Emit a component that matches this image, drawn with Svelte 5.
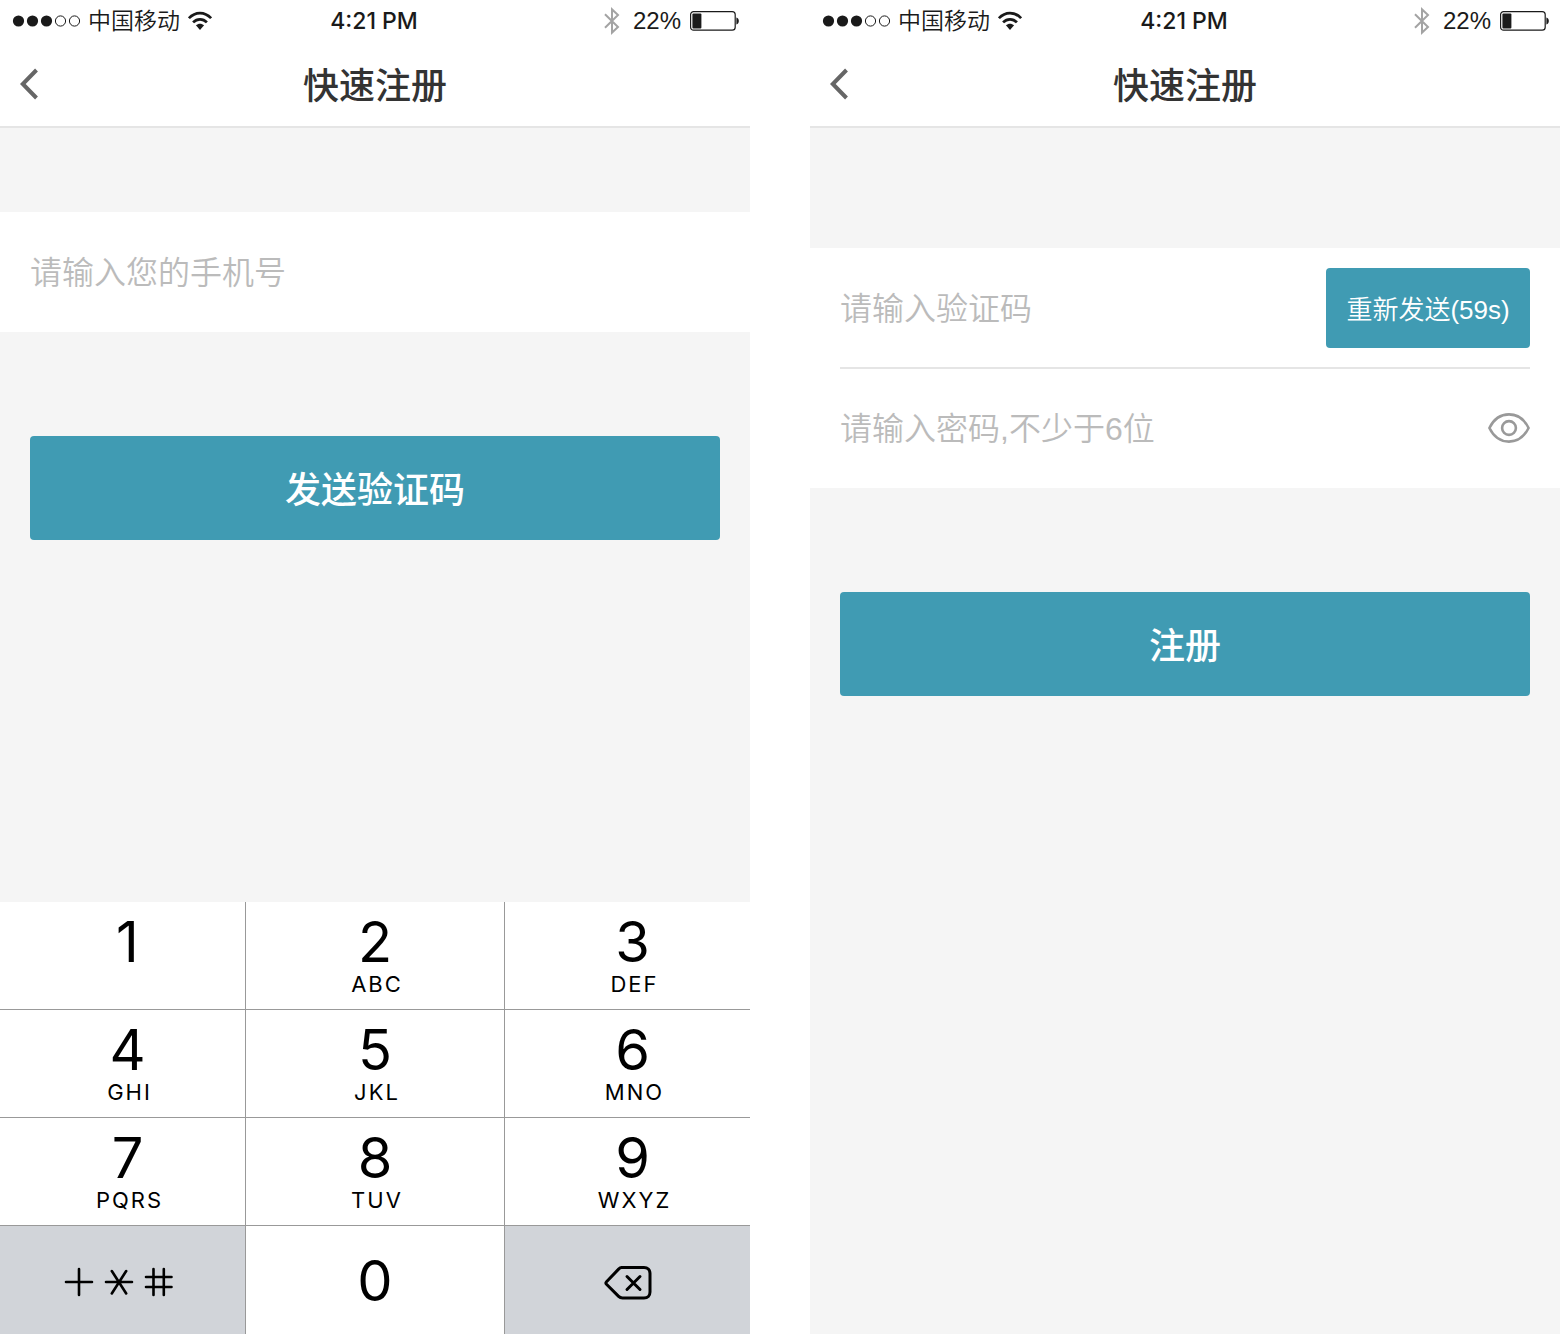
<script>
  let phone = $state('');
  let code = $state('');
  let password = $state('');
  let visible = $state(false);

  const keys = [
    ['1', ''],
    ['2', 'ABC'],
    ['3', 'DEF'],
    ['4', 'GHI'],
    ['5', 'JKL'],
    ['6', 'MNO'],
    ['7', 'PQRS'],
    ['8', 'TUV'],
    ['9', 'WXYZ']
  ];

  function press(digit) {
    phone += digit;
  }

  function erase() {
    phone = phone.slice(0, -1);
  }
</script>

{#snippet topBar()}
  <div class="status">
    <div class="carrier">
      <svg class="dots" width="68" height="12" viewBox="0 0 68 12" aria-hidden="true">
        <g fill="#1a1a1a">
          <circle cx="6.5" cy="6" r="5.6" />
          <circle cx="20.5" cy="6" r="5.6" />
          <circle cx="34.5" cy="6" r="5.6" />
        </g>
        <g fill="none" stroke="#1a1a1a" stroke-width="1">
          <circle cx="48.5" cy="6" r="5.1" />
          <circle cx="62.5" cy="6" r="5.1" />
        </g>
      </svg>
      <span class="operator">中国移动</span>
      <svg width="24" height="20" viewBox="0 0 24 20" aria-hidden="true">
        <g fill="none" stroke="#1a1a1a" stroke-width="2.7">
          <path d="M.9 7.2C7.2.3 16.8.3 23.1 7.2" />
          <path d="M5.1 11.4c4-4.1 9.8-4.1 13.8 0" />
        </g>
        <path d="M7.9 14.3c2.5-2.1 5.7-2.1 8.2 0L12 18.9z" fill="#1a1a1a" />
      </svg>
    </div>
    <time class="time">4:21 PM</time>
    <div class="power">
      <svg width="16" height="28" viewBox="0 0 16 28" fill="none" stroke="#a3a3a3" stroke-width="2" aria-hidden="true">
        <path d="M1 7.2 14 20 8 25.6V2.4L14 8 1 20.8" />
      </svg>
      <span class="percent">22%</span>
      <svg width="50" height="20" viewBox="0 0 50 20" aria-hidden="true">
        <rect x=".6" y=".6" width="44.6" height="18.6" rx="3" fill="none" stroke="#1a1a1a" stroke-width="1.2" />
        <rect x="2.4" y="2.4" width="9" height="15" rx="1" fill="#1a1a1a" />
        <path d="M46.4 6.4c3.2.8 3.2 6.2 0 7z" fill="#1a1a1a" />
      </svg>
    </div>
  </div>
  <header class="nav">
    <button class="back" type="button" aria-label="返回">
      <svg width="20" height="32" viewBox="0 0 20 32" fill="none" stroke="#666" stroke-width="4" aria-hidden="true">
        <path d="M16.500 2 2.800 16l13.700 14" />
      </svg>
    </button>
    <h1>快速注册</h1>
  </header>
{/snippet}

<main class="board">
  <section class="screen">
    {@render topBar()}
    <form class="form phone-form" onsubmit={(e) => e.preventDefault()}>
      <div class="fields">
        <div class="field">
          <input type="tel" aria-label="手机号" placeholder="请输入您的手机号" bind:value={phone} />
        </div>
      </div>
      <button class="submit" type="submit">发送验证码</button>
    </form>
    <div class="keypad">
      {#each keys as [digit, letters]}
        <button class="key" type="button" onclick={() => press(digit)}>
          <span class="digit">{digit}</span>
          <span class="letters">{letters}</span>
        </button>
      {/each}
      <button class="key tool symbols" type="button" aria-label="符号">
        <svg width="110" height="30" viewBox="0 0 110 30" fill="none" stroke="#000" stroke-width="2.6" stroke-linecap="round" aria-hidden="true">
          <path d="M2 15h26M15 2v26" />
          <path d="M42 15h26M47.8 4l14.4 22.500M62.200 4 47.800 26.500" />
          <path d="M82 10h25.500M82 20h25.500M89.500 2v26M99.800 2v26" />
        </svg>
      </button>
      <button class="key zero" type="button" onclick={() => press('0')}>
        <span class="digit">0</span>
      </button>
      <button class="key tool" type="button" aria-label="删除" onclick={erase}>
        <svg width="48" height="36" viewBox="0 0 48 36" fill="none" stroke="#000" stroke-width="3" stroke-linecap="round" stroke-linejoin="round" aria-hidden="true">
          <path d="M17.500 2.500H40c3.600 0 6 2.400 6 6v18.500c0 3.600-2.400 6-6 6H18.500c-1.600 0-2.800-.5-3.900-1.600L2.500 19.300c-.9-.9-.9-1.700 0-2.600L14.600 4.100c1-1 1.700-1.600 2.900-1.600z" />
          <path d="m23 11.500 13 13M36 11.500l-13 13" />
        </svg>
      </button>
    </div>
  </section>

  <section class="screen">
    {@render topBar()}
    <form class="form code-form" onsubmit={(e) => e.preventDefault()}>
      <div class="fields">
        <div class="field">
          <input type="text" aria-label="验证码" placeholder="请输入验证码" bind:value={code} />
          <button class="resend" type="button">重新发送(59s)</button>
        </div>
        <div class="field">
          <input type={visible ? 'text' : 'password'} aria-label="密码" placeholder="请输入密码,不少于6位" bind:value={password} />
          <button class="eye" type="button" aria-label="显示密码" onclick={() => (visible = !visible)}>
            <svg width="42" height="30" viewBox="0 0 42 30" fill="none" stroke="#999" stroke-width="2.600" aria-hidden="true">
              <path d="M1.400 15C5.500 6.700 12.500 1.400 21 1.400S36.500 6.700 40.600 15C36.500 23.300 29.500 28.600 21 28.600S5.500 23.300 1.400 15z" stroke-linejoin="round" />
              <circle cx="21" cy="15" r="6.900" />
            </svg>
          </button>
        </div>
      </div>
      <button class="submit" type="submit">注册</button>
    </form>
  </section>
</main>

<style>
  :global(body) {
    margin: 0;
    background: #fff;
  }

  .board {
    display: grid;
    grid-template-columns: 1fr 1fr;
    gap: 60px;
    min-height: 100vh;
    font-family: 'Liberation Sans', 'Noto Sans CJK SC', sans-serif;
    color: #333;
  }

  button,
  input {
    box-sizing: border-box;
    margin: 0;
    padding: 0;
    border: 0;
    border-radius: 0;
    background: none;
    color: inherit;
    font: inherit;
  }

  button {
    cursor: pointer;
  }

  svg {
    display: block;
    flex: none;
  }

  .screen {
    display: flex;
    flex-direction: column;
    background: #f5f5f5;
  }

  .status {
    display: grid;
    grid-template-columns: 1fr auto 1fr;
    align-items: center;
    box-sizing: border-box;
    height: 42px;
    padding: 0 10px 0 12px;
    background: #fff;
    color: #1a1a1a;
    font-size: 24px;
    line-height: 40px;
  }

  .carrier,
  .power {
    display: flex;
    align-items: center;
    gap: 8px;
  }

  .operator {
    font-size: 23px;
    font-weight: 350;
  }

  .time {
    padding-right: 4px;
    font-family: Inter, sans-serif;
    font-size: 23px;
    font-weight: 500;
  }

  .power {
    justify-content: flex-end;
    gap: 9px;
  }

  .percent {
    padding-left: 4px;
  }

  .nav {
    display: grid;
    grid-template-columns: 60px 1fr 60px;
    align-items: center;
    height: 84px;
    border-bottom: 2px solid #e5e5e5;
    background: #fff;
  }

  .back {
    display: flex;
    align-items: center;
    height: 84px;
    padding-left: 20px;
  }

  h1 {
    margin: 0;
    padding-top: 6px;
    font-size: 36px;
    font-weight: 500;
    line-height: 78px;
    text-align: center;
  }

  .form {
    display: flex;
    flex: 1;
    flex-direction: column;
  }

  .phone-form {
    padding-top: 84px;
  }

  .code-form {
    padding-top: 120px;
  }

  .fields {
    padding: 0 30px;
    background: #fff;
  }

  .field {
    display: flex;
    align-items: center;
    box-sizing: border-box;
    height: 120px;
  }

  .field + .field {
    height: 121px;
    margin-top: -1px;
    padding-bottom: 1px;
    border-top: 2px solid #e5e5e5;
  }

  input {
    flex: 1;
    min-width: 0;
    height: 80px;
    padding-top: 2px;
    outline: none;
    font-size: 32px;
    font-weight: 350;
  }

  input::placeholder {
    color: #bbb;
    opacity: 1;
  }

  .resend {
    min-width: 204px;
    height: 80px;
    padding: 0 16px 2px;
    border-radius: 4px;
    background: #409bb3;
    color: #fff;
    font-size: 26px;
    font-weight: 350;
  }

  .submit {
    height: 104px;
    margin: 104px 30px 0;
    padding-bottom: 3px;
    border-radius: 4px;
    background: #409bb3;
    color: #fff;
    font-size: 36px;
    font-weight: 500;
  }

  .keypad {
    display: grid;
    grid-template-columns: 245fr 260fr 245fr;
    grid-auto-rows: 108px;
    background: #fff;
    color: #000;
    font-family: Inter, sans-serif;
  }

  .key {
    display: flex;
    flex-direction: column;
    align-items: center;
    padding-top: 9px;
    border-bottom: 1px solid #999;
  }

  .key:nth-child(3n + 1),
  .key:nth-child(3n) {
    padding-left: 10px;
  }

  .key:nth-child(3n + 2) {
    border-right: 1px solid #999;
    border-left: 1px solid #999;
  }

  .digit {
    font-size: 56px;
    line-height: 62px;
  }

  .letters {
    padding-left: 4px;
    font-size: 22px;
    letter-spacing: 2px;
    line-height: 22px;
  }

  .key:nth-child(n + 10) {
    justify-content: center;
    padding-top: 2px;
    border-bottom: 0;
  }

  .key.tool {
    padding-top: 6px;
    padding-left: 0;
    background: #d1d4d9;
  }

  .key.symbols {
    padding-top: 4px;
    padding-right: 8px;
  }
</style>
